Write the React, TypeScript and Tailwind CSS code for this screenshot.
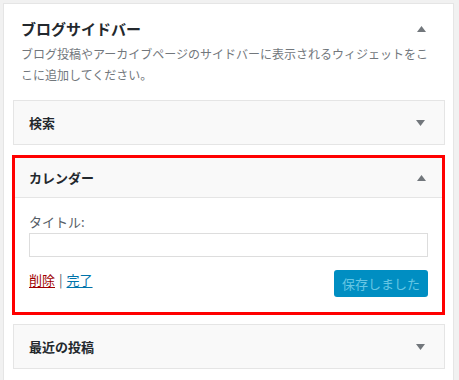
import React from "react";

const FONT = "font-['Noto_Sans_CJK_JP','Noto_Sans',sans-serif]";

function Arrow({ up }: { up?: boolean }) {
  return (
    <svg width="9" height="6" viewBox="0 0 9 6" className="shrink-0">
      {up ? <path d="M4.5 0L9 6H0z" fill="#72777c" /> : <path d="M0 0h9L4.5 6z" fill="#72777c" />}
    </svg>
  );
}

function Widget({ title }: { title: string }) {
  return (
    <div className="border border-[#e5e5e5] bg-[#f9f9f9] h-[45px] flex items-center justify-between pl-[15px] pr-[19px]">
      <span className="text-[13px] font-semibold text-[#23282d] leading-[18px]">{title}</span>
      <Arrow />
    </div>
  );
}

export default function App() {
  return (
    <div className={`${FONT} bg-[#f1f1f1] h-[380px] overflow-hidden pt-[3px] pl-[3px] pr-[5px]`}>
      <div className="bg-white border border-[#e5e5e5] h-[400px] pt-[15px] pl-[9px] pr-[8px]">
        <div className="flex items-center justify-between pl-[8px] pr-[19px]">
          <h2 className="text-[15px] font-bold text-[#23282d] leading-[20px] m-0">ブログサイドバー</h2>
          <Arrow up />
        </div>
        <p className="mt-[4px] pl-[8px] pr-[10px] text-[12px] leading-[21px] text-[#72777c]">
          ブログ投稿やアーカイブページのサイドバーに表示されるウィジェットをここに追加してください。
        </p>
        <div className="mt-[15px] flex flex-col">
          <Widget title="検索" />
          <div className="mt-[10px] -ml-px border-[3px] border-[#ff0000] bg-white">
            <div className="bg-[#f9f9f9] h-[40px] border-b border-[#e5e5e5] flex items-center justify-between pl-[14px] pr-[16px]">
              <span className="text-[13px] font-semibold text-[#23282d] leading-[18px]">カレンダー</span>
              <Arrow up />
            </div>
            <div className="pt-[15px] pb-[15px] pl-[14px] pr-[14px]">
              <label className="block text-[13px] leading-[18px] text-[#555d66]">タイトル:</label>
              <input
                type="text"
                className="mt-[2px] block w-full h-[24px] border border-[#dddddd] bg-white outline-none"
              />
              <div className="mt-[13px] flex items-start justify-between">
                <div className="text-[13px] leading-[18px] pt-[1px]">
                  <a className="text-[#a00000] underline underline-offset-2">削除</a>
                  <span className="text-[#555d66] mx-[4px]">|</span>
                  <a className="text-[#0073aa] underline underline-offset-2">完了</a>
                </div>
                <button
                  type="button"
                  className="h-[27px] w-[94px] rounded-[3px] bg-[#008ec2] text-[13px] text-[#66c6e4] leading-none"
                >
                  保存しました
                </button>
              </div>
            </div>
          </div>
          <div className="mt-[9px]">
            <Widget title="最近の投稿" />
          </div>
        </div>
      </div>
    </div>
  );
}
